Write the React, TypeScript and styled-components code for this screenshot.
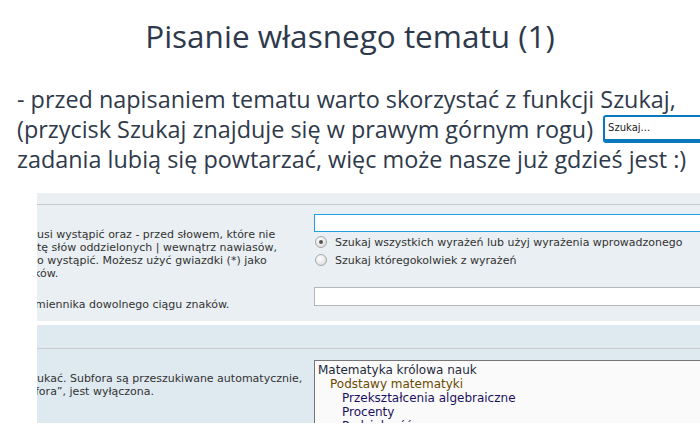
import React from 'react';
import styled, { createGlobalStyle } from 'styled-components';

const GlobalStyle = createGlobalStyle`
  html, body {
    margin: 0;
    padding: 0;
    background: #ffffff;
  }
  body {
    width: 700px;
    height: 438px;
    overflow: hidden;
  }
`;

const Slide = styled.div`
  width: 700px;
  height: 438px;
  overflow: hidden;
  display: flex;
  flex-direction: column;
  font-family: 'Open Sans', 'DejaVu Sans', sans-serif;
  color: #2f3a4b;
`;

const Title = styled.h1`
  margin: 0;
  padding-top: 13px;
  height: 46px;
  text-align: center;
  font-weight: 400;
  font-size: 31.5px;
  line-height: 46px;
  color: #2e3a4c;
`;

const Body = styled.div`
  margin-top: 25px;
  padding-left: 17px;
  display: flex;
  flex-direction: column;
`;

const Line = styled.div`
  height: 30px;
  display: flex;
  align-items: center;
  white-space: nowrap;
  font-size: 23.4px;
  line-height: 30px;
`;

const SearchBox = styled.div`
  margin-left: 10px;
  width: 120px;
  height: 22px;
  box-sizing: content-box;
  border: 2px solid #0b78bd;
  border-bottom-width: 4px;
  border-radius: 3px;
  background: #fff;
  display: flex;
  align-items: center;
  padding-left: 3px;
  font-family: 'DejaVu Sans', Verdana, sans-serif;
  font-size: 10px;
  color: #222;
  flex-shrink: 0;
`;

const Shot = styled.div`
  margin-top: 19px;
  margin-left: 37px;
  width: 663px;
  height: 230px;
  overflow: hidden;
  display: flex;
  flex-direction: column;
  font-family: 'DejaVu Sans', Verdana, sans-serif;
  font-size: 11px;
  color: #333;
`;

const Section = styled.div<{ $bg: string; $h: number }>`
  background: ${({ $bg }) => $bg};
  height: ${({ $h }) => $h}px;
  flex-shrink: 0;
  display: flex;
  flex-direction: column;
`;

const SectionHead = styled.div<{ $h: number }>`
  height: ${({ $h }) => $h}px;
  border-bottom: 1px solid #c8ccd0;
  flex-shrink: 0;
`;

const Gap = styled.div`
  height: 4px;
  background: #fff;
  flex-shrink: 0;
`;

const Row = styled.div<{ $top: number }>`
  display: grid;
  grid-template-columns: 277px 1fr;
  padding-top: ${({ $top }) => $top}px;
`;

const Explain = styled.div<{ $top: number }>`
  padding-top: ${({ $top }) => $top}px;
  line-height: 13px;
  white-space: nowrap;
  overflow: hidden;
`;

const ExplainLine = styled.div<{ $shift?: number }>`
  margin-left: ${({ $shift }) => $shift ?? 0}px;
`;

const Field = styled.div<{ $active?: boolean }>`
  height: ${({ $active }) => ($active ? 16 : 17)}px;
  width: 420px;
  background: #fff;
  border: 1px solid ${({ $active }) => ($active ? '#1ca1e2' : '#b1b6bb')};
`;

const Options = styled.div`
  display: flex;
  flex-direction: column;
  gap: 4px;
  margin-top: 3px;
`;

const Option = styled.label`
  display: flex;
  align-items: center;
  gap: 8px;
  height: 14px;
  white-space: nowrap;
  padding-left: 1px;
`;

const Radio = styled.span<{ $checked?: boolean }>`
  width: 10px;
  height: 10px;
  border-radius: 50%;
  border: 1px solid #a8a8a8;
  background: radial-gradient(circle at 40% 35%, #ffffff 0%, #e6e6e6 60%, #d0d0d0 100%);
  display: flex;
  align-items: center;
  justify-content: center;
  flex-shrink: 0;
  &::after {
    content: '';
    width: 4px;
    height: 4px;
    border-radius: 50%;
    background: ${({ $checked }) => ($checked ? '#555' : 'transparent')};
  }
`;

const ForumList = styled.div`
  width: 420px;
  height: 100px;
  border: 1px solid #767676;
  background: #fafafa;
  padding: 2px 3px;
  font-size: 12px;
  line-height: 14px;
  color: #111;
`;

const ForumItem = styled.div<{ $level: number }>`
  padding-left: ${({ $level }) => $level * 12}px;
  color: ${({ $level }) => ($level === 0 ? '#1d2a3a' : $level === 1 ? '#6a4a00' : '#1a1060')};
  white-space: nowrap;
`;

const forums: { name: string; level: number }[] = [
  { name: 'Matematyka królowa nauk', level: 0 },
  { name: 'Podstawy matematyki', level: 1 },
  { name: 'Przekształcenia algebraiczne', level: 2 },
  { name: 'Procenty', level: 2 },
  { name: 'Podzielność', level: 2 },
  { name: 'Funkcje', level: 1 },
];

export default function App() {
  return (
    <>
      <GlobalStyle />
      <Slide>
        <Title>Pisanie własnego tematu (1)</Title>
        <Body>
          <Line>- przed napisaniem tematu warto skorzystać z funkcji Szukaj,</Line>
          <Line>
            (przycisk Szukaj znajduje się w prawym górnym rogu)
            <SearchBox>Szukaj...</SearchBox>
          </Line>
          <Line>zadania lubią się powtarzać, więc może nasze już gdzieś jest :)</Line>
        </Body>
        <Shot>
          <Section $bg="#e9eff2" $h={128}>
            <SectionHead $h={11} />
            <Row $top={9}>
              <Explain $top={14}>
                <ExplainLine>usi wystąpić oraz - przed słowem, które nie</ExplainLine>
                <ExplainLine>tę słów oddzielonych | wewnątrz nawiasów,</ExplainLine>
                <ExplainLine>o wystąpić. Możesz użyć gwiazdki (*) jako</ExplainLine>
                <ExplainLine $shift={-3}>ków.</ExplainLine>
              </Explain>
              <div>
                <Field $active />
                <Options>
                  <Option>
                    <Radio $checked />
                    Szukaj wszystkich wyrażeń lub użyj wyrażenia wprowadzonego
                  </Option>
                  <Option>
                    <Radio />
                    Szukaj któregokolwiek z wyrażeń
                  </Option>
                </Options>
              </div>
            </Row>
            <Row $top={7}>
              <Explain $top={11}>
                <ExplainLine $shift={-2}>miennika dowolnego ciągu znaków.</ExplainLine>
              </Explain>
              <div>
                <Field />
              </div>
            </Row>
          </Section>
          <Gap />
          <Section $bg="#dfe9f0" $h={120}>
            <SectionHead $h={23} />
            <Row $top={11}>
              <Explain $top={12}>
                <ExplainLine>ukać. Subfora są przeszukiwane automatycznie,</ExplainLine>
                <ExplainLine $shift={-2}>fora”, jest wyłączona.</ExplainLine>
              </Explain>
              <div>
                <ForumList>
                  {forums.map((f) => (
                    <ForumItem key={f.name} $level={f.level}>
                      {f.name}
                    </ForumItem>
                  ))}
                </ForumList>
              </div>
            </Row>
          </Section>
        </Shot>
      </Slide>
    </>
  );
}
